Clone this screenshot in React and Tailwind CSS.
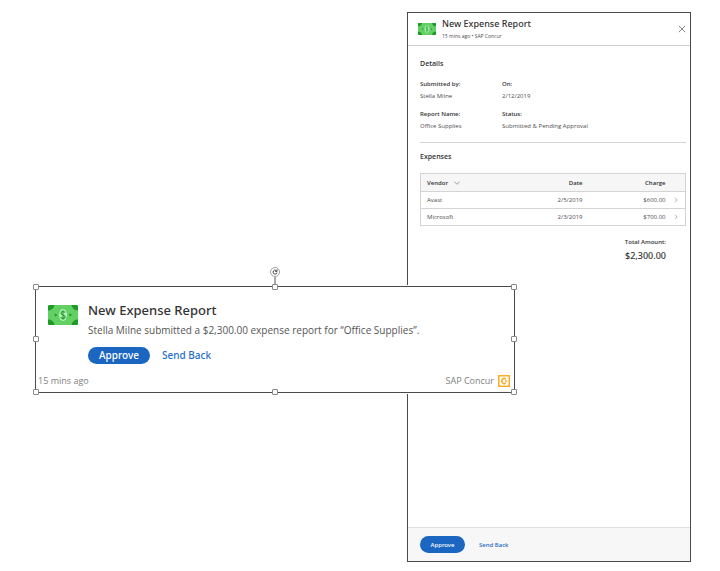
import React, { useState } from "react";

const expenses = [
  { vendor: "Avast", date: "2/5/2019", charge: "$600.00" },
  { vendor: "Microsoft", date: "2/3/2019", charge: "$700.00" },
];

const details = [
  { label: "Submitted by:", value: "Stella Milne" },
  { label: "On:", value: "2/12/2019" },
  { label: "Report Name:", value: "Office Supplies" },
  { label: "Status:", value: "Submitted & Pending Approval" },
];

// Resize handles around the selected card
const handles = [
  "left-0 top-0",
  "left-1/2 top-0",
  "left-full top-0",
  "left-0 top-1/2",
  "left-full top-1/2",
  "left-0 top-full",
  "left-1/2 top-full",
  "left-full top-full",
];

const MoneyIcon = ({ className }) => (
  <svg viewBox="0 0 30 20" className={className} aria-hidden="true">
    <rect width="30" height="20" rx="1.5" fill="#63d063" />
    <g fill="#1f9a28">
      <path d="M1.5 0H6.5A6 6 0 0 1 0 5.5V1.5A1.5 1.5 0 0 1 1.5 0Z" />
      <path d="M28.5 0H23.5A6 6 0 0 0 30 5.5V1.5A1.5 1.5 0 0 0 28.5 0Z" />
      <path d="M1.5 20H6.5A6 6 0 0 0 0 14.5V18.5A1.5 1.5 0 0 0 1.5 20Z" />
      <path d="M28.5 20H23.5A6 6 0 0 1 30 14.5V18.5A1.5 1.5 0 0 1 28.5 20Z" />
      <circle cx="7.7" cy="10" r="1.2" />
      <circle cx="22.3" cy="10" r="1.2" />
    </g>
    <ellipse cx="15" cy="10" rx="4" ry="6" fill="#b5f0b8" />
    <path
      d="M17 7.6C16.6 6.8 15.9 6.5 15 6.5C13.8 6.5 13 7.2 13 8.2C13 10.4 17.1 9.5 17.1 11.8C17.1 12.9 16.2 13.5 15 13.5C14 13.5 13.2 13.1 12.8 12.2M15 5.3V14.7"
      fill="none"
      stroke="#1f9a28"
      strokeWidth="1.1"
    />
  </svg>
);

const ConcurIcon = ({ className }) => (
  <svg viewBox="0 0 12 12" className={className} aria-hidden="true">
    <rect x="0.75" y="0.75" width="10.5" height="10.5" fill="#fff" stroke="#f5ae25" strokeWidth="1.5" />
    <path d="M7.9 4.1A2.5 2.5 0 1 0 7.9 7.9" fill="none" stroke="#f5ae25" strokeWidth="1.5" />
    <circle cx="8" cy="6" r="1" fill="#f5ae25" />
  </svg>
);

const ReportPanel = () => (
  <section className="ml-auto flex w-full max-w-[284px] flex-col border border-[#4a4a4a] bg-white text-[6px] leading-2 text-[#4d4d4d]">
    <header className="flex items-center border-b border-[#cfcfcf] py-1 pr-1 pl-2.5">
      <MoneyIcon className="h-3 w-[18px]" />
      <div className="ml-1.5 grow">
        <h1 className="font-['Noto_Sans',sans-serif] text-[9px] leading-3.5 font-medium text-[#333]">
          New Expense Report
        </h1>
        <p className="text-[5px] leading-2.5">15 mins ago • SAP Concur</p>
      </div>
      <button type="button" aria-label="Close">
        <svg viewBox="0 0 8 8" className="size-2" aria-hidden="true">
          <path d="M0.8 0.8L7.2 7.2M7.2 0.8L0.8 7.2" stroke="#666" strokeWidth="0.8" />
        </svg>
      </button>
    </header>

    <div className="grow pr-1 pl-3">
      <div className="border-b border-[#d4d4d4] pt-3.5 pb-3">
        <h2 className="text-[7px] leading-2 font-semibold text-[#333]">Details</h2>
        <dl className="mt-3 grid grid-cols-[82px_1fr] gap-y-2.5">
          {details.map((item) => (
            <div key={item.label}>
              <dt className="font-semibold text-[#333]">{item.label}</dt>
              <dd className="mt-1">{item.value}</dd>
            </div>
          ))}
        </dl>
      </div>

      <h2 className="mt-2.5 mb-3 text-[7px] leading-2 font-semibold text-[#333]">Expenses</h2>
      <table className="w-full border border-[#d4d4d4]">
        <thead className="bg-[#f6f6f6] text-[#333]">
          <tr className="h-[18px]">
            <th className="pl-1.5 text-left font-semibold">
              <span className="flex items-center gap-1.5">
                Vendor
                <svg viewBox="0 0 6 4" className="h-1 w-1.5" aria-hidden="true">
                  <path d="M0.4 0.6L3 3.3L5.6 0.6" fill="none" stroke="#777" strokeWidth="0.7" />
                </svg>
              </span>
            </th>
            <th className="text-right font-semibold">Date</th>
            <th className="w-[83px] text-right font-semibold">Charge</th>
            <th className="w-5" aria-label="Open" />
          </tr>
        </thead>
        <tbody>
          {expenses.map((row) => (
            <tr key={row.vendor} className="h-[17px] border-t border-[#d4d4d4]">
              <td className="pl-1.5">{row.vendor}</td>
              <td className="text-right">{row.date}</td>
              <td className="text-right">{row.charge}</td>
              <td>
                <svg viewBox="0 0 4 6" className="ml-2 h-1.5 w-1" aria-hidden="true">
                  <path d="M1 0.8L3.1 3L1 5.2" fill="none" stroke="#888" strokeWidth="0.6" />
                </svg>
              </td>
            </tr>
          ))}
        </tbody>
      </table>

      <div className="mt-3 pr-5 text-right text-[#333]">
        <p className="font-semibold">Total Amount:</p>
        <p className="mt-1 font-['Noto_Sans',sans-serif] text-[9px] leading-3 font-medium">$2,300.00</p>
      </div>
    </div>

    <footer className="flex items-center gap-3.5 border-t border-[#dedede] bg-[#f7f7f7] px-3 py-2 font-['Noto_Sans',sans-serif] font-medium">
      <button type="button" className="h-[17px] w-[45px] rounded-full bg-[#1b66c0] text-white">
        Approve
      </button>
      <button type="button" className="text-[#1b66c0]">
        Send Back
      </button>
    </footer>
  </section>
);

const NotificationCard = () => {
  const [selected, setSelected] = useState(true);

  return (
    <article
      onClick={() => setSelected(true)}
      className="absolute top-1/2 left-[35px] w-2/3 border border-[#4a4a4a] bg-white text-[10px] leading-3.5 text-[#555] ring-1 ring-white"
    >
      <div className="flex gap-2.5 pt-4 pl-3">
        <MoneyIcon className="mt-0.5 h-5 w-[30px] shrink-0" />
        <div>
          <h2 className="font-['Noto_Sans',sans-serif] text-[13px] leading-3.5 font-medium text-[#333]">
            New Expense Report
          </h2>
          <p className="mt-1.5">Stella Milne submitted a $2,300.00 expense report for “Office Supplies”.</p>
          <div className="mt-2.5 flex items-center gap-3 font-['Noto_Sans',sans-serif] font-medium">
            <button type="button" className="h-[17px] w-[62px] rounded-full bg-[#1b66c0] text-white">
              Approve
            </button>
            <button type="button" className="text-[#1f6fca]">
              Send Back
            </button>
          </div>
        </div>
      </div>
      <footer className="mt-2.5 flex items-center justify-between pr-1 pb-1 pl-0.5 text-[9px] text-[#808080]">
        <span>15 mins ago</span>
        <span className="flex items-center gap-1">
          SAP Concur
          <ConcurIcon className="size-3" />
        </span>
      </footer>

      {selected && (
        <>
          <svg
            viewBox="0 0 10 20"
            className="absolute bottom-full left-1/2 h-5 w-2.5 -translate-x-1/2"
            aria-hidden="true"
          >
            <path d="M5 10V20" stroke="#555" />
            <circle cx="5" cy="5" r="4.5" fill="#fff" stroke="#888" strokeWidth="0.8" />
            <path d="M6.4 3.6A2 2 0 1 0 7 5.6M7.1 2.6V4.3H5" fill="none" stroke="#333" strokeWidth="0.9" />
          </svg>
          {handles.map((pos) => (
            <span
              key={pos}
              className={`absolute size-1.5 -translate-x-1/2 -translate-y-1/2 rounded-[1px] border border-[#888] bg-white ${pos}`}
            />
          ))}
        </>
      )}
    </article>
  );
};

const App = () => (
  <main className="relative flex min-h-screen bg-white pt-3 pr-[29px] pb-[9px] font-['Open_Sans',sans-serif]">
    <ReportPanel />
    <NotificationCard />
  </main>
);

export default App;
